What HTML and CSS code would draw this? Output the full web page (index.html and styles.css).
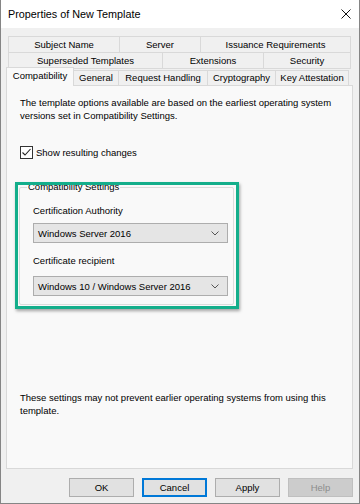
FILE: index.html
```html
<!DOCTYPE html>
<html>
<head>
<meta charset="utf-8">
<title>Properties of New Template</title>
<link rel="stylesheet" href="styles.css">
</head>
<body>
<div class="window">
  <div class="titlebar">
    <span class="title">Properties of New Template</span>
    <svg class="close" width="10" height="10" viewBox="0 0 10 10"><path d="M0.5 0.5 L9.5 9.5 M9.5 0.5 L0.5 9.5" stroke="#111" stroke-width="1" fill="none"/></svg>
  </div>
  <div class="content">
    <div class="tabs">
      <div class="row row-back">
        <div class="tab t-subject">Subject Name</div>
        <div class="tab t-server">Server</div>
        <div class="tab t-issuance">Issuance Requirements</div>
      </div>
      <div class="row row-back row-mid">
        <div class="tab t-superseded">Superseded Templates</div>
        <div class="tab t-extensions">Extensions</div>
        <div class="tab t-security">Security</div>
      </div>
      <div class="row row-front">
        <div class="tab t-compat selected">Compatibility</div>
        <div class="tab t-general">General</div>
        <div class="tab t-request">Request Handling</div>
        <div class="tab t-crypto">Cryptography</div>
        <div class="tab t-key">Key Attestation</div>
      </div>
    </div>
    <div class="panel">
      <p class="intro">The template options available are based on the earliest operating system<br>versions set in Compatibility Settings.</p>
      <div class="check">
        <span class="box"><svg width="11" height="11" viewBox="0 0 11 11"><path d="M1.5 5.5 L4 8 L9.5 2" stroke="#222" stroke-width="1.1" fill="none"/></svg></span>
        <span>Show resulting changes</span>
      </div>
      <fieldset class="group">
        <legend>Compatibility Settings</legend>
        <div class="field-label">Certification Authority</div>
        <div class="combo"><span>Windows Server 2016</span><svg width="8" height="5" viewBox="0 0 8 5"><path d="M0.5 0.5 L4 4 L7.5 0.5" stroke="#555" stroke-width="1" fill="none"/></svg></div>
        <div class="field-label second">Certificate recipient</div>
        <div class="combo second"><span>Windows 10 / Windows Server 2016</span><svg width="8" height="5" viewBox="0 0 8 5"><path d="M0.5 0.5 L4 4 L7.5 0.5" stroke="#555" stroke-width="1" fill="none"/></svg></div>
      </fieldset>
      <p class="note">These settings may not prevent earlier operating systems from using this<br>template.</p>
      <div class="highlight"></div>
    </div>
    <div class="buttons">
      <button class="btn">OK</button>
      <button class="btn default">Cancel</button>
      <button class="btn">Apply</button>
      <button class="btn disabled">Help</button>
    </div>
  </div>
</div>
</body>
</html>
```
FILE: styles.css
```css
* { box-sizing: border-box; }
html, body { margin: 0; padding: 0; }
body {
  width: 360px;
  height: 504px;
  overflow: hidden;
  font-family: "Liberation Sans", Arial, sans-serif;
  font-size: 9.5px;
  color: #000;
  background: #f0f0f0;
}
.window {
  width: 360px;
  height: 504px;
  border: 1px solid #858585;
  border-top: none;
  background: #f0f0f0;
  display: flex;
  flex-direction: column;
}
.titlebar {
  flex: none;
  height: 28px;
  background: #fff;
  display: flex;
  align-items: center;
  padding: 0 8px 0 7px;
}
.title { flex: 1; font-size: 10.8px; }
.close { display: block; }

.content { padding: 8px 6px 0 5px; }
.tabs { display: flex; flex-direction: column; }
.row { display: flex; }
.row-back { margin-left: 2px; height: 16px; }
.row-mid { height: 16px; }
.tab {
  border: 1px solid #d9d9d9;
  border-bottom: none;
  background: #f0f0f0;
  display: flex;
  align-items: center;
  justify-content: center;
  white-space: nowrap;
  margin-left: -1px;
  padding-bottom: 1px;
}
.tab:first-child { margin-left: 0; }
.row-back .tab { height: 17px; }
.row-mid .tab { border-bottom: 1px solid #d9d9d9; }
.row-front { height: 17px; align-items: flex-end; }
.row-front .tab { height: 15px; }
.row-front .tab.selected {
  align-self: flex-start;
  height: 19px;
  margin-top: -1px;
  background: #f9f9f9;
  position: relative;
  z-index: 2;
  padding-bottom: 3px;
}
.t-subject { width: 112px; }
.t-server { width: 82px; }
.t-issuance { width: 151px; }
.t-superseded { width: 155px; }
.t-extensions { width: 102px; }
.t-security { width: 88px; }
.t-compat { width: 68px; }
.t-general { width: 46px; }
.t-request { width: 90px; }
.t-crypto { width: 69px; }
.t-key { width: 74px; }

.panel {
  position: relative;
  height: 384px;
  border: 1px solid #d9d9d9;
  background: #f9f9f9;
  padding: 0 12px 0 13px;
}
.intro, .note { margin: 0; line-height: 13px; }
.intro { margin-top: 10px; }
.check {
  margin-top: 24px;
  display: flex;
  align-items: center;
  gap: 3px;
  height: 13px;
}
.box {
  width: 13px;
  height: 13px;
  border: 1px solid #333;
  background: #fff;
  display: flex;
  align-items: center;
  justify-content: center;
}
.box svg { display: block; }
.group {
  margin: 22px 0 0 -1px;
  width: 215px;
  border: 1px solid #dcdcdc;
  border-radius: 2px;
  padding: 0 5px 8px 13px;
}
.group legend {
  padding: 0 1px;
  margin-left: -6px;
  line-height: 12px;
}
.field-label { line-height: 12px; margin-top: 12px; }
.combo {
  margin-top: 6px;
  height: 20px;
  width: 195px;
  border: 1px solid #adadad;
  background: #e5e5e5;
  display: flex;
  align-items: center;
  justify-content: space-between;
  padding: 0 8px 0 4px;
}
.combo.second { margin-top: 9px; }
.combo svg { display: block; }
.note { margin-top: 86px; }
.highlight {
  position: absolute;
  left: 8px;
  top: 96px;
  width: 224px;
  height: 127px;
  border: 3px solid #14ae8b;
  box-shadow: 1px 2px 3px rgba(0, 0, 0, 0.35);
  pointer-events: none;
}

.buttons {
  display: flex;
  justify-content: flex-end;
  gap: 8px;
  margin-top: 9px;
}
.btn {
  width: 65px;
  height: 19px;
  border: 1px solid #adadad;
  background: #e1e1e1;
  font-family: "Liberation Sans", Arial, sans-serif;
  font-size: 9.5px;
  color: #000;
  padding: 0;
}
.btn.default { border-color: #0078d7; box-shadow: inset 0 0 0 1px #0078d7; }
.btn.disabled { background: #cccccc; border-color: #bfbfbf; color: #8d8d8d; }
```
